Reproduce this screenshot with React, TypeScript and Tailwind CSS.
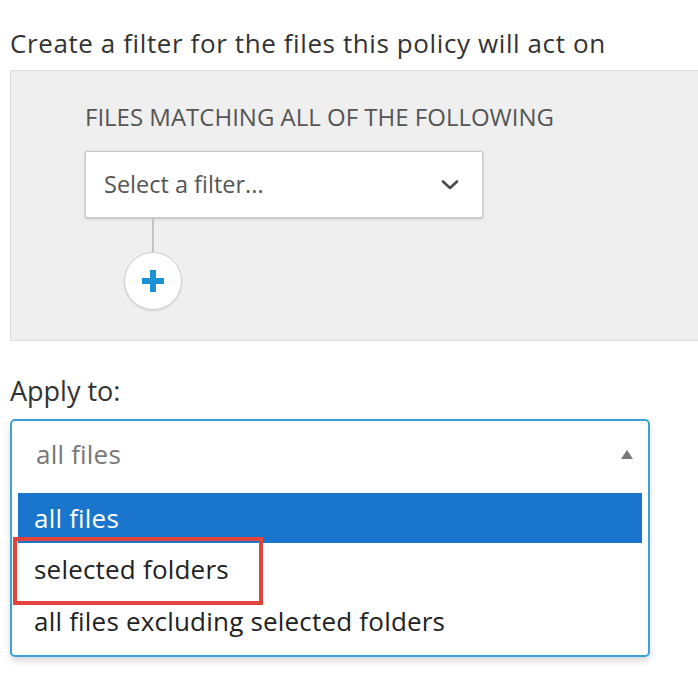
import React from 'react';

function ChevronDown() {
  return (
    <svg width="18" height="12" viewBox="0 0 18 12" className="text-[#4a4a4a]">
      <path d="M2 2.5 L9 9 L16 2.5" fill="none" stroke="currentColor" strokeWidth="2.6" strokeLinecap="round" strokeLinejoin="round" />
    </svg>
  );
}

function PlusButton() {
  return (
    <div className="flex h-[58px] w-[58px] items-center justify-center rounded-full border border-[#cfcfcf] bg-white shadow-[0_1px_2px_rgba(0,0,0,0.12)]">
      <svg width="26" height="26" viewBox="0 0 26 26">
        <path d="M10 2h6v8h8v6h-8v8h-6v-8H2v-6h8z" fill="#1a92d4" />
      </svg>
    </div>
  );
}

const options = [
  { label: 'all files', active: true, marked: false, h: 'h-[50px]' },
  { label: 'selected folders', active: false, marked: true, h: 'h-[52px]' },
  { label: 'all files excluding selected folders', active: false, marked: false, h: 'h-[52px]' },
];

export default function App() {
  return (
    <div className="min-h-[676px] w-[698px] overflow-hidden bg-white font-['Open_Sans',sans-serif] text-[#333]">
      <h1 className="pl-[10px] pt-[26px] text-[26px] leading-[34px] tracking-[0.6px] text-[#333]">
        Create a filter for the files this policy will act on
      </h1>

      <div className="ml-[10px] mt-[10px] h-[271px] w-[700px] rounded-[2px] border border-[#dcdcdc] bg-[#efefef] pl-[74px] pt-[31px]">
        <div className="text-[24px] leading-[30px] text-[#555]">FILES MATCHING ALL OF THE FOLLOWING</div>
        <div className="mt-[19px] flex h-[67px] w-[398px] items-center justify-between rounded-[2px] border border-[#c8c8c8] bg-white pl-[18px] pr-[23px] shadow-[0_1px_3px_rgba(0,0,0,0.2)]">
          <span className="text-[23.5px] text-[#555]">Select a filter...</span>
          <ChevronDown />
        </div>
        <div className="ml-[67px] h-[34px] w-[2px] bg-[#c4c4c4]" />
        <div className="ml-[39px]">
          <PlusButton />
        </div>
      </div>

      <div className="pl-[10px] pt-[33px] text-[27px] leading-[34px] text-[#333]">Apply to:</div>

      <div className="ml-[10px] mt-[11px] w-[640px] rounded-[5px] border-2 border-[#39a3d9] bg-white pb-[8px] shadow-[0_4px_6px_rgba(0,0,0,0.15)]">
        <div className="flex h-[72px] items-center justify-between pb-[6px] pl-[24px] pr-[15px]">
          <span className="text-[26px] tracking-[0.2px] text-[#777]">all files</span>
          <svg width="12" height="9" viewBox="0 0 12 9">
            <path d="M6 0 L12 9 L0 9 Z" fill="#777" />
          </svg>
        </div>
        <div className="px-[6px]">
          {options.map((o) => (
            <div
              key={o.label}
              className={`relative flex ${o.h} items-center pl-[16px] text-[26px] tracking-[0.2px] ${o.active ? 'bg-[#1a75cd] text-white' : 'text-[#222]'}`}
            >
              {o.label}
              {o.marked && (
                <div className="absolute left-[-5px] top-[-6px] h-[68px] w-[250px] border-[4px] border-[#e1443d]" />
              )}
            </div>
          ))}
        </div>
      </div>
    </div>
  );
}
